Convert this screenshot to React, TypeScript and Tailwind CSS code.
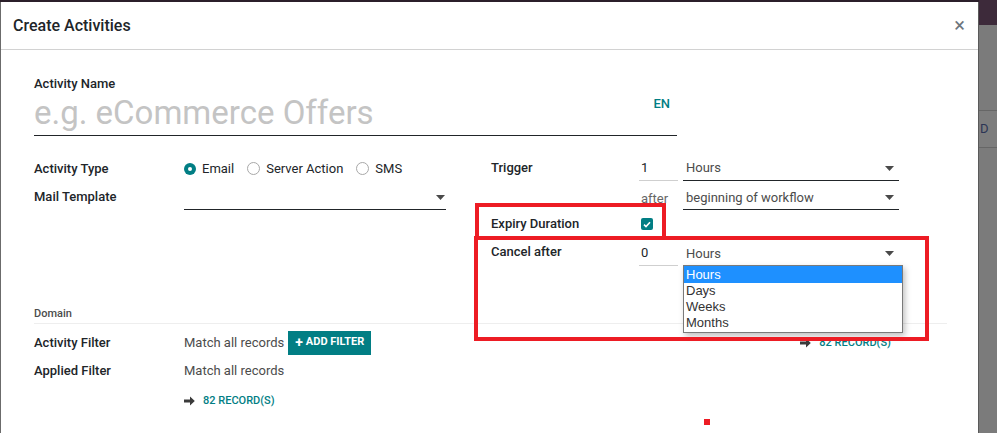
import React from "react";

const teal = "bg-[#017e84]";

function Caret() {
  return (
    <svg width="9" height="5" viewBox="0 0 9 5" className="shrink-0">
      <path d="M0 0 L9 0 L4.5 5 Z" fill="#4a4a4a" />
    </svg>
  );
}

function Radio({ checked, label }: { checked?: boolean; label: string }) {
  return (
    <div className="flex items-center gap-[6px]">
      {checked ? (
        <span className={`w-[12px] h-[12px] rounded-full ${teal} flex items-center justify-center`}>
          <span className="w-[4px] h-[4px] rounded-full bg-white" />
        </span>
      ) : (
        <span className="w-[13px] h-[13px] rounded-full border border-[#a8a8a8] bg-white" />
      )}
      <span className="text-[13px] text-[#212529]">{label}</span>
    </div>
  );
}

function Arrow() {
  return (
    <svg width="11" height="10" viewBox="0 0 11 10">
      <path d="M0 3.6 H6 V0.5 L10.8 5 L6 9.5 V6.4 H0 Z" fill="#3b3b3b" />
    </svg>
  );
}

export default function App() {
  return (
    <div
      className="w-[997px] h-[433px] overflow-hidden flex bg-[#7b7b7b]"
      style={{ fontFamily: "Roboto, 'Open Sans', sans-serif" }}
    >
      {/* Modal column */}
      <div className="w-[979px] flex flex-col shrink-0">
        <div className="h-[2px] bg-[#2b1f2a]" />
        <div className="relative flex-1 bg-white border-l border-[#6b6b6b] border-r border-r-[#5a5a5a]">
          {/* Header */}
          <div className="h-[48px] border-b border-[#d2d2d2] flex items-center pl-[12px] pr-[13px]">
            <div className="text-[16px] font-medium text-[#212529] flex-1 leading-none">Create Activities</div>
            <div className="text-[20px] text-[#6c757d] leading-none -mt-[1px]">×</div>
          </div>

          {/* Body */}
          <div className="pl-[33px] pr-[32px]">
            {/* Activity name */}
            <div className="w-[643px] pt-[25px]">
              <div className="text-[13px] font-medium text-[#212529] leading-[18px]">Activity Name</div>
              <div className="flex items-end border-b-[1.5px] border-[#212529] h-[43px]">
                <div className="text-[33px] text-[#c4c4c4] leading-[38px] flex-1 pb-[3px]">e.g. eCommerce Offers</div>
                <div className="text-[13px] text-[#017e84] font-medium pr-[7px] self-start mt-[1px]">EN</div>
              </div>
            </div>

            {/* Two column form */}
            <div className="flex mt-[20px]">
              {/* Left group */}
              <div className="w-[457px] flex flex-col gap-[5px]">
                <div className="flex h-[25px] items-center">
                  <div className="w-[150px] text-[13px] font-medium text-[#212529]">Activity Type</div>
                  <div className="flex items-center gap-[13px]">
                    <Radio checked label="Email" />
                    <Radio label="Server Action" />
                    <Radio label="SMS" />
                  </div>
                </div>
                <div className="flex h-[24px]">
                  <div className="w-[150px] text-[13px] font-medium text-[#212529] leading-[24px] -mt-[1px]">Mail Template</div>
                  <div className="w-[262px] border-b-[1.5px] border-[#212529] flex items-center justify-end pr-[1px]">
                    <Caret />
                  </div>
                </div>
              </div>

              {/* Right group */}
              <div className="flex flex-col">
                <div className="flex h-[25px]">
                  <div className="w-[148px] text-[13px] font-medium text-[#212529] leading-[24px]">Trigger</div>
                  <div className="w-[39px] border-b-[1.5px] border-[#cfcfcf] text-[13px] text-[#212529] leading-[24px] pl-[2px]">1</div>
                  <div className="w-[216px] ml-[5px] border-b-[1.5px] border-[#212529] flex items-center justify-between pl-[3px] pr-[5px]">
                    <span className="text-[13px] text-[#4c4c4c]">Hours</span>
                    <Caret />
                  </div>
                </div>
                <div className="flex h-[24px] mt-[5px]">
                  <div className="w-[148px]" />
                  <div className="w-[39px] text-[13px] text-[#666] leading-[26px] pl-[2px]">after</div>
                  <div className="w-[216px] ml-[5px] border-b-[1.5px] border-[#212529] flex items-center justify-between pl-[3px] pr-[5px]">
                    <span className="text-[13px] text-[#4c4c4c]">beginning of workflow</span>
                    <Caret />
                  </div>
                </div>
                <div className="flex h-[24px] items-center mt-[2px]">
                  <div className="w-[150px] text-[13px] font-medium text-[#212529]">Expiry Duration</div>
                  <span className={`w-[12px] h-[12px] rounded-[2px] ${teal} flex items-center justify-center`}>
                    <svg width="8" height="7" viewBox="0 0 8 7">
                      <path d="M1 3.6 L3 5.5 L7 1.2" stroke="white" strokeWidth="1.6" fill="none" />
                    </svg>
                  </span>
                </div>
                <div className="flex h-[25px] mt-[5px]">
                  <div className="w-[148px] text-[13px] font-medium text-[#212529] leading-[22px]">Cancel after</div>
                  <div className="w-[39px] border-b-[1.5px] border-[#cfcfcf] text-[13px] text-[#212529] leading-[24px] pl-[2px]">0</div>
                  <div className="w-[216px] ml-[5px] flex items-center justify-between pl-[3px] pr-[5px]">
                    <span className="text-[13px] text-[#4c4c4c]">Hours</span>
                    <Caret />
                  </div>
                </div>
              </div>
            </div>

            {/* Domain */}
            <div className="mt-[40px] border-b border-[#eeeeee] pb-[1px] w-[913px]">
              <div className="text-[11px] text-[#4c4c4c] font-medium leading-[16px]">Domain</div>
            </div>
            <div className="flex h-[25px] items-center mt-[6px]">
              <div className="w-[150px] text-[13px] font-medium text-[#212529]">Activity Filter</div>
              <span className="text-[13px] text-[#4c4c4c]">Match all records</span>
              <span className={`ml-[4px] ${teal} text-white text-[11px] font-bold h-[24px] px-[7px] flex items-center gap-[3px]`}>
                <span className="text-[14px] leading-none -mt-[1px]">+</span>ADD FILTER
              </span>
              <div className="flex items-center gap-[8px] ml-[429px] mt-[1px]">
                <Arrow />
                <span className="text-[11px] text-[#017e84] font-medium">82 RECORD(S)</span>
              </div>
            </div>
            <div className="flex h-[20px] items-center mt-[6px]">
              <div className="w-[150px] text-[13px] font-medium text-[#212529]">Applied Filter</div>
              <span className="text-[13px] text-[#4c4c4c]">Match all records</span>
            </div>
            <div className="flex items-center gap-[8px] ml-[150px] mt-[12px]">
              <Arrow />
              <span className="text-[11px] text-[#017e84] font-medium">82 RECORD(S)</span>
            </div>
          </div>

          {/* Dropdown list overlay */}
          <div
            className="absolute left-[682px] top-[263px] w-[220px] bg-white border border-[#7a7a7a] shadow-[2px_3px_6px_rgba(0,0,0,0.25)] text-[13px] text-[#333]"
            style={{ fontFamily: "'Liberation Sans', Arial, sans-serif" }}
          >
            <div className="bg-[#1e90ff] text-white h-[17px] leading-[17px] pl-[2px]">Hours</div>
            <div className="h-[16px] leading-[16px] pl-[2px]">Days</div>
            <div className="h-[16px] leading-[16px] pl-[2px]">Weeks</div>
            <div className="h-[17px] leading-[16px] pl-[2px]">Months</div>
          </div>

          {/* Red annotation boxes */}
          <div className="absolute left-[474px] top-[201px] w-[191px] h-[37px] border-[4px] border-[#ed1c24]" />
          <div className="absolute left-[473px] top-[234px] w-[455px] h-[105px] border-[4px] border-[#ed1c24]" />
          <div className="absolute left-[703px] top-[417px] w-[6px] h-[6px] bg-[#ed1c24]" />
        </div>
      </div>

      {/* Right background strip */}
      <div className="flex-1 flex flex-col">
        <div className="h-[25px] bg-[#3d2a3a]" />
        <div className="h-[85px] bg-[#7b7b7b]" />
        <div className="h-[38px] border-t border-b border-[#666] bg-[#7d7d7d] flex items-center text-[13px] text-[#2b3555] pl-[1px]">D</div>
        <div className="flex-1 bg-[#7b7b7b]" />
      </div>
    </div>
  );
}
